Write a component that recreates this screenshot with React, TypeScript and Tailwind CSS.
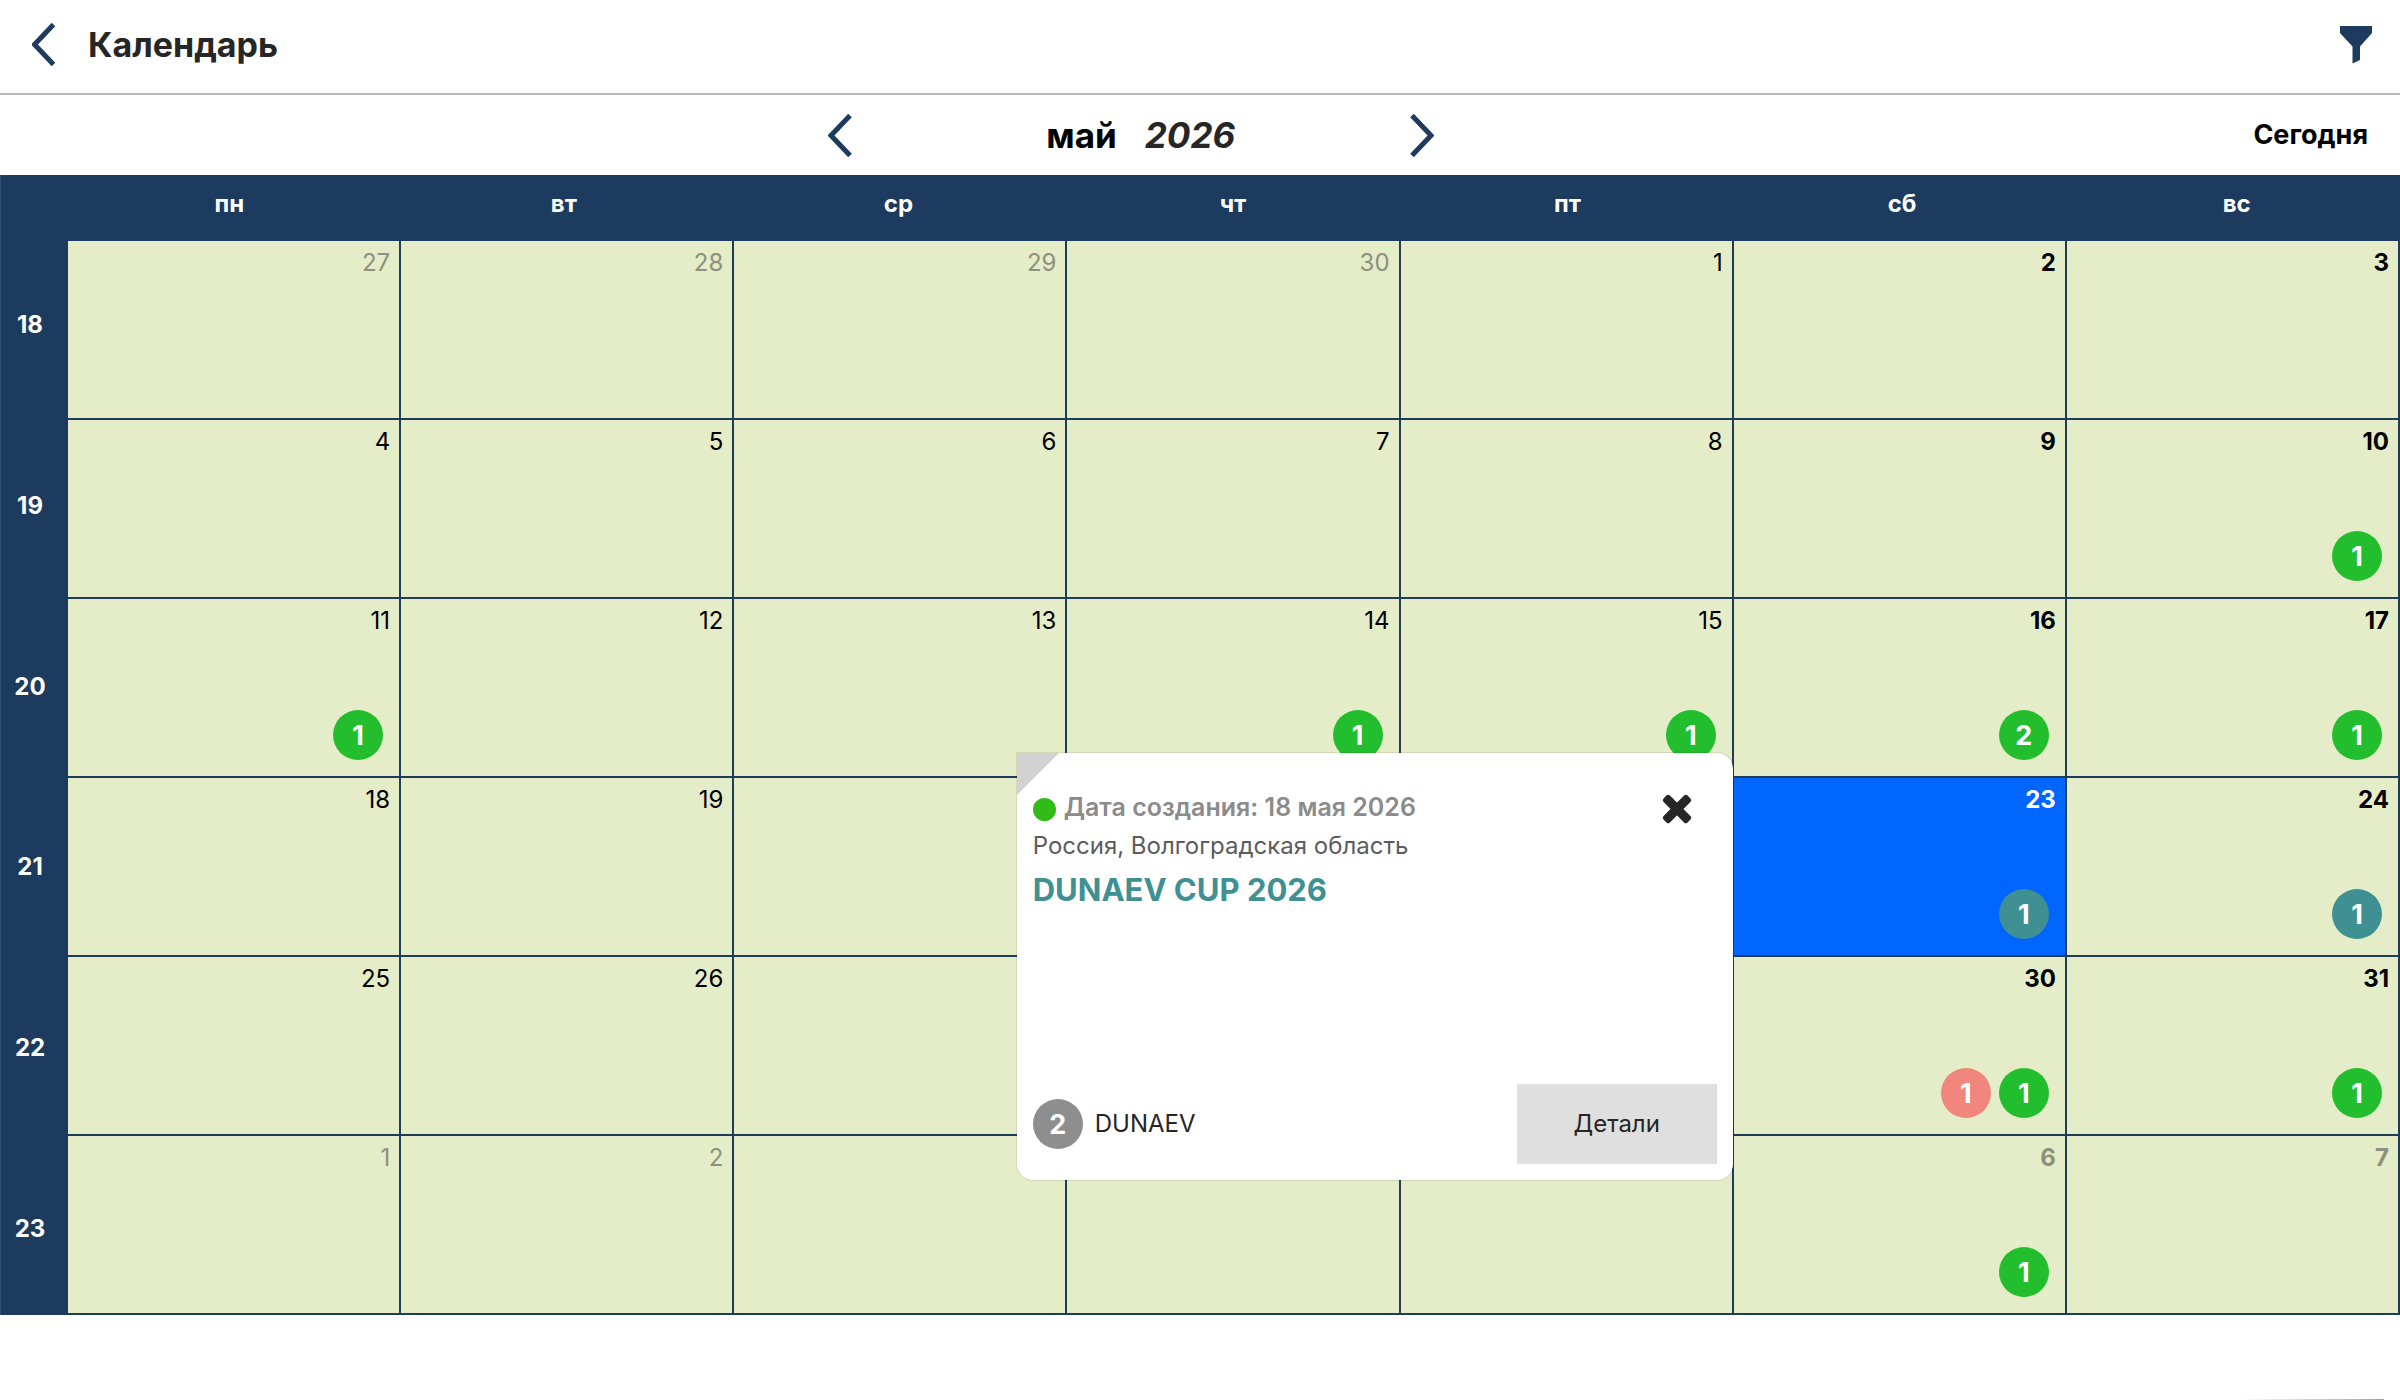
type Tone = "green" | "teal" | "red" | "gray";

type Marker = { count: number; tone: Tone };

type Day = {
  date: number;
  outside?: boolean;
  weekend?: boolean;
  selected?: boolean;
  covered?: boolean;
  markers: Marker[];
};

const WEEKDAYS = ["пн", "вт", "ср", "чт", "пт", "сб", "вс"];
const WEEK_NUMBERS = [18, 19, 20, 21, 22, 23];

const TONES: Record<Tone, string> = {
  green: "bg-[#22be2d]",
  teal: "bg-[#3f9092]",
  red: "bg-[#f0867e]",
  gray: "bg-[#8e8e8e]",
};

// Markers keyed by the day's index in the six-week grid (0 = 27 April).
const MARKERS: Record<number, Marker[]> = {
  13: [{ count: 1, tone: "green" }],
  14: [{ count: 1, tone: "green" }],
  17: [{ count: 1, tone: "green" }],
  18: [{ count: 1, tone: "green" }],
  19: [{ count: 2, tone: "green" }],
  20: [{ count: 1, tone: "green" }],
  26: [{ count: 1, tone: "teal" }],
  27: [{ count: 1, tone: "teal" }],
  33: [
    { count: 1, tone: "red" },
    { count: 1, tone: "green" },
  ],
  34: [{ count: 1, tone: "green" }],
  40: [{ count: 1, tone: "green" }],
};

const DAYS: Day[] = Array.from({ length: 42 }, (_, i) => {
  const n = i - 3;
  const column = i % 7;
  return {
    date: n < 1 ? n + 30 : n > 31 ? n - 31 : n,
    outside: n < 1 || n > 31,
    weekend: column > 4,
    selected: n === 23,
    // Days lying under the open event card.
    covered: i > 20 && column > 1 && column < 5,
    markers: MARKERS[i] ?? [],
  };
});

function Chevron({ direction, wide }: { direction: "left" | "right"; wide?: boolean }) {
  const points =
    direction === "left"
      ? wide
        ? "21.5,1.5 2.5,21.5 21.5,41.5"
        : "22,1.5 3,21.5 22,41.5"
      : "2,1.5 21,21.5 2,41.5";
  return (
    <svg width="24" height="43" viewBox="0 0 24 43" fill="none" aria-hidden="true">
      <polyline points={points} stroke="#1c3b5e" strokeWidth="5" />
    </svg>
  );
}

function Badge({ count, tone }: Marker) {
  return (
    <span
      className={`flex size-[50px] shrink-0 items-center justify-center rounded-full text-[27px] font-bold leading-none text-white ${TONES[tone]}`}
    >
      {count}
    </span>
  );
}

function EventCard() {
  return (
    <article className="absolute -right-px -top-[25px] z-10 flex h-[427px] w-[716px] flex-col justify-between rounded-2xl rounded-tl-none bg-white px-4 pb-4 pt-9 text-left font-normal shadow-[0_0_0_1px_rgba(0,0,0,0.08)]">
      <svg className="absolute left-0 top-0" width="42" height="42" viewBox="0 0 42 42" aria-hidden="true">
        <path d="M0 0H42L0 42Z" fill="#d2d2d2" />
      </svg>
      <div>
        <div className="flex items-start justify-between">
          <p className="flex items-center gap-2 text-[25px] font-semibold leading-9 text-[#8b8b8b]">
            <span className="mt-1 size-[23px] rounded-full bg-[#30bb18]" />
            Дата создания: 18 мая 2026
          </p>
          <button type="button" aria-label="Закрыть" className="mr-6 mt-1">
            <svg width="32" height="32" viewBox="0 0 32 32" fill="#262626" aria-hidden="true">
              <rect x="-1" y="11.500" width="34" height="9" rx="2.500" transform="rotate(45 16 16)" />
              <rect x="-1" y="11.500" width="34" height="9" rx="2.500" transform="rotate(-45 16 16)" />
            </svg>
          </button>
        </div>
        <p className="text-2xl leading-[42px] text-[#5c5c5c]">Россия, Волгоградская область</p>
        <h2 className="text-[31px] font-bold leading-[46px] text-[#3f9092]">DUNAEV CUP 2026</h2>
      </div>
      <div className="flex items-center justify-between">
        <div className="flex items-center gap-3 text-2xl text-[#262626]">
          <Badge count={2} tone="gray" />
          DUNAEV
        </div>
        <button type="button" className="h-20 w-[200px] bg-[#dfdfdf] text-2xl text-[#262626]">
          Детали
        </button>
      </div>
    </article>
  );
}

function DayCell({ day, withCard }: { day: Day; withCard: boolean }) {
  const background = day.selected ? "bg-[#0066ff]" : "bg-[#e5ecc8]";
  const color = day.selected ? "text-white" : day.outside ? "text-[#8e917c]" : "text-black";
  return (
    <td
      className={`relative flex h-[179px] flex-col justify-between border-b-2 border-r-2 border-[#1d3d58] pt-2 ${background}`}
    >
      {!day.covered && (
        <span className={`pr-[9px] text-right text-2xl leading-7 ${color} ${day.weekend ? "font-bold" : ""}`}>
          {day.date}
        </span>
      )}
      {day.markers.length > 0 && (
        <div className="flex justify-end gap-2 pb-4 pr-4">
          {day.markers.map((marker, i) => (
            <Badge key={i} {...marker} />
          ))}
        </div>
      )}
      {withCard && <EventCard />}
    </td>
  );
}

export default function App() {
  return (
    <div className="min-h-screen overflow-x-hidden bg-white font-['Inter',sans-serif]">
      <header className="flex h-[95px] items-center justify-between border-b-2 border-[#bababa] pb-1 pl-8 pr-7">
        <div className="flex items-center gap-8">
          <button type="button" aria-label="Назад">
            <Chevron direction="left" wide />
          </button>
          <h1 className="text-[34px] font-bold leading-10 text-[#262626]">Календарь</h1>
        </div>
        <button type="button" aria-label="Фильтр">
          <svg width="32" height="38" viewBox="0 0 32 38" aria-hidden="true">
            <path d="M0 0H32V7L20 20.500V34L12.500 37.500V20.500L0 7Z" fill="#1c3b5e" />
          </svg>
        </button>
      </header>

      <nav className="flex h-20 items-center pl-2 pr-8">
        <div className="flex flex-1 justify-center">
          <div className="flex w-[606px] items-center justify-between">
            <button type="button" aria-label="Предыдущий месяц">
              <Chevron direction="left" />
            </button>
            <div className="flex gap-7 pl-5 text-[35px] leading-10">
              <span className="font-bold text-black">май</span>
              <span className="font-bold italic text-[#262626]">2026</span>
            </div>
            <button type="button" aria-label="Следующий месяц">
              <Chevron direction="right" />
            </button>
          </div>
        </div>
        <button type="button" className="text-[27px] font-bold text-black">
          Сегодня
        </button>
      </nav>

      <main className="flex bg-[#1c3b5e]">
        <aside className="flex w-[68px] flex-col justify-between border-l border-[#2f4f75] pb-[74px] pr-[9px] pt-[138px] text-center text-2xl font-bold leading-6 text-white">
          {WEEK_NUMBERS.map((week) => (
            <span key={week}>{week}</span>
          ))}
        </aside>
        <table className="block flex-1">
          <thead className="block">
            <tr className="-ml-1.5 -mr-1 grid h-[66px] grid-cols-7">
              {WEEKDAYS.map((name) => (
                <th key={name} scope="col" className="pt-4 text-2xl font-bold leading-[26px] text-white">
                  {name}
                </th>
              ))}
            </tr>
          </thead>
          <tbody className="block">
            {WEEK_NUMBERS.map((week, row) => (
              <tr key={week} className="grid grid-cols-7">
                {DAYS.slice(row * 7, row * 7 + 7).map((day, col) => (
                  <DayCell key={col} day={day} withCard={row === 3 && col === 4} />
                ))}
              </tr>
            ))}
          </tbody>
        </table>
      </main>

      <div className="fixed bottom-0 right-4 h-px w-36 bg-linear-to-r from-transparent to-gray-400" />
    </div>
  );
}
